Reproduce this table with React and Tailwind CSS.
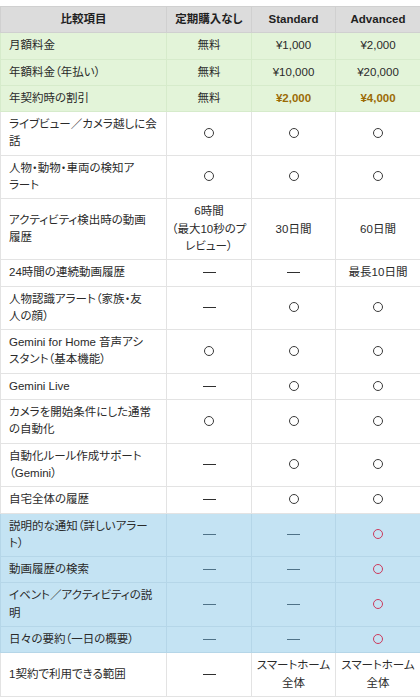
import React from 'react';

const rows = [
  { tone: 'green', label: ['月額料金'], cells: ['無料', '¥1,000', '¥2,000'] },
  { tone: 'green', label: ['年額料金（年払い）'], cells: ['無料', '¥10,000', '¥20,000'] },
  { tone: 'green', label: ['年契約時の割引'], cells: ['無料', '¥2,000', '¥4,000'], gold: true },
  { label: ['ライブビュー／カメラ越しに会', '話'], cells: ['○', '○', '○'] },
  { label: ['人物・動物・車両の検知ア', 'ラート'], cells: ['○', '○', '○'] },
  { label: ['アクティビティ検出時の動画', '履歴'], cells: [['6時間', '（最大10秒のプ', 'レビュー）'], '30日間', '60日間'] },
  { label: ['24時間の連続動画履歴'], cells: ['—', '—', '最長10日間'] },
  { label: ['人物認識アラート（家族・友', '人の顔）'], cells: ['—', '○', '○'] },
  { label: ['Gemini for Home 音声アシ', 'スタント（基本機能）'], cells: ['○', '○', '○'] },
  { label: ['Gemini Live'], cells: ['—', '○', '○'] },
  { label: ['カメラを開始条件にした通常', 'の自動化'], cells: ['○', '○', '○'] },
  { label: ['自動化ルール作成サポート', '（Gemini）'], cells: ['—', '○', '○'] },
  { label: ['自宅全体の履歴'], cells: ['—', '○', '○'] },
  { tone: 'blue', label: ['説明的な通知（詳しいアラー', 'ト）'], cells: ['—', '—', '○'] },
  { tone: 'blue', label: ['動画履歴の検索'], cells: ['—', '—', '○'] },
  { tone: 'blue', label: ['イベント／アクティビティの説', '明'], cells: ['—', '—', '○'] },
  { tone: 'blue', label: ['日々の要約（一日の概要）'], cells: ['—', '—', '○'] },
  { label: ['1契約で利用できる範囲'], cells: ['—', ['スマートホーム', '全体'], ['スマートホーム', '全体']] },
];

const toneCls = {
  green: 'bg-[#e3f4d9] border-[#d6ebcb]',
  blue: 'bg-[#c4e3f3] border-[#b5d6e8]',
  white: 'bg-white border-[#e3e3e3]',
};

function Lines({ lines }) {
  const arr = Array.isArray(lines) ? lines : [lines];
  return arr.map((l, i) => (
    <React.Fragment key={i}>
      {i > 0 && <br />}
      {l}
    </React.Fragment>
  ));
}

function Circle({ red }) {
  return (
    <span
      className={`inline-block w-[10px] h-[10px] rounded-full border-[1.5px] align-[-1px] ${
        red ? 'border-[#cc3a5c]' : 'border-[#3a3a3a]'
      }`}
    />
  );
}

function Dash({ blue }) {
  return (
    <span
      className={`inline-block w-[13px] h-px align-[3px] ${blue ? 'bg-[#4f7287]' : 'bg-[#2f2f2f]'}`}
    />
  );
}

export default function App() {
  return (
    <div className="bg-white pt-[6px] text-[11.5px] leading-[17.3px] text-[#2a2a2a] font-['Liberation_Sans','Noto_Sans_CJK_JP',sans-serif] [font-feature-settings:'palt']">
      <table className="w-[420px] border-collapse table-fixed">
        <colgroup>
          <col className="w-[166px]" />
          <col className="w-[85px]" />
          <col className="w-[84px]" />
          <col className="w-[85px]" />
        </colgroup>
        <thead>
          <tr className="bg-[#dcdcdc]">
            {['比較項目', '定期購入なし', 'Standard', 'Advanced'].map((h) => (
              <th key={h} className="border border-[#d0d0d0] py-[4px] font-bold text-[#1f1f1f] text-center whitespace-nowrap">
                {h}
              </th>
            ))}
          </tr>
        </thead>
        <tbody>
          {rows.map((r, ri) => {
            const tone = toneCls[r.tone || 'white'];
            const blue = r.tone === 'blue';
            return (
              <tr key={ri}>
                <td className={`border ${tone} py-[4px] pl-[8px] pr-0 whitespace-nowrap text-left`}>
                  <Lines lines={r.label} />
                </td>
                {r.cells.map((c, ci) => {
                  const color = r.gold && ci > 0 ? 'font-bold text-[#9b6b05]' : '';
                  return (
                    <td key={ci} className={`border ${tone} py-[4px] px-0 text-center whitespace-nowrap ${color}`}>
                      {c === '○' ? (
                        <Circle red={blue} />
                      ) : c === '—' ? (
                        <Dash blue={blue} />
                      ) : (
                        <Lines lines={c} />
                      )}
                    </td>
                  );
                })}
              </tr>
            );
          })}
        </tbody>
      </table>
    </div>
  );
}
